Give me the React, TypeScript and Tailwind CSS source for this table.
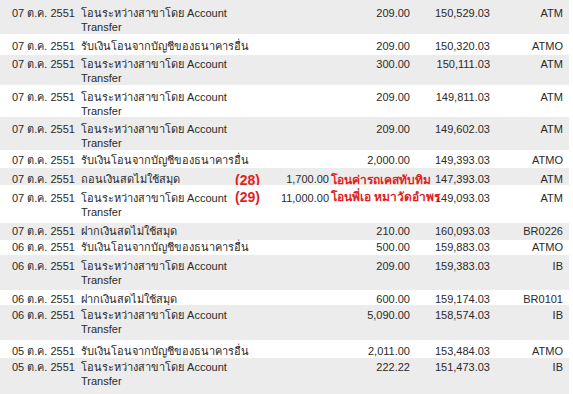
const GRAY = "bg-[#ececec]"

type Row = {
  date: string
  desc: string[]
  amount: string
  balance: string
  channel: string
  gray: boolean
  h: string
  pt: string
  note?: { tag: string; text: string }
}

const T = ["โอนระหว่างสาขาโดย Account", "Transfer"]
const R = ["รับเงินโอนจากบัญชีของธนาคารอื่น"]

const rows: Row[] = [
  { date: "07 ต.ค. 2551", desc: T, amount: "209.00", balance: "150,529.03", channel: "ATM", gray: true, h: "h-[34px]", pt: "pt-[6px]" },
  { date: "07 ต.ค. 2551", desc: R, amount: "209.00", balance: "150,320.03", channel: "ATMO", gray: false, h: "h-[21px]", pt: "pt-[5px]" },
  { date: "07 ต.ค. 2551", desc: T, amount: "300.00", balance: "150,111.03", channel: "ATM", gray: true, h: "h-[30px]", pt: "pt-[2px]" },
  { date: "07 ต.ค. 2551", desc: T, amount: "209.00", balance: "149,811.03", channel: "ATM", gray: false, h: "h-[32px]", pt: "pt-[5px]" },
  { date: "07 ต.ค. 2551", desc: T, amount: "209.00", balance: "149,602.03", channel: "ATM", gray: true, h: "h-[33px]", pt: "pt-[5px]" },
  { date: "07 ต.ค. 2551", desc: R, amount: "2,000.00", balance: "149,393.03", channel: "ATMO", gray: false, h: "h-[18px]", pt: "pt-[3px]" },
  {
    date: "07 ต.ค. 2551", desc: ["ถอนเงินสดไม่ใช้สมุด"], amount: "1,700.00", balance: "147,393.03", channel: "ATM",
    gray: true, h: "h-[17px]", pt: "pt-[4px]", note: { tag: "(28)", text: "โอนค่ารถเคสทับทิม" },
  },
  {
    date: "07 ต.ค. 2551", desc: T, amount: "11,000.00", balance: "149,093.03", channel: "ATM",
    gray: false, h: "h-[38px]", pt: "pt-[6px]", note: { tag: "(29)", text: "โอนพี่เอ หมาวัดอำพร" },
  },
  { date: "07 ต.ค. 2551", desc: ["ฝากเงินสดไม่ใช้สมุด"], amount: "210.00", balance: "160,093.03", channel: "BR0226", gray: true, h: "h-[17px]", pt: "pt-[1px]" },
  { date: "06 ต.ค. 2551", desc: R, amount: "500.00", balance: "159,883.03", channel: "ATMO", gray: false, h: "h-[15px]", pt: "pt-0" },
  { date: "06 ต.ค. 2551", desc: T, amount: "209.00", balance: "159,383.03", channel: "IB", gray: true, h: "h-[35px]", pt: "pt-[4px]" },
  { date: "06 ต.ค. 2551", desc: ["ฝากเงินสดไม่ใช้สมุด"], amount: "600.00", balance: "159,174.03", channel: "BR0101", gray: false, h: "h-[15px]", pt: "pt-[2px]" },
  { date: "06 ต.ค. 2551", desc: T, amount: "5,090.00", balance: "158,574.03", channel: "IB", gray: true, h: "h-[35px]", pt: "pt-[3px]" },
  { date: "05 ต.ค. 2551", desc: R, amount: "2,011.00", balance: "153,484.03", channel: "ATMO", gray: false, h: "h-[18px]", pt: "pt-[4px]" },
  { date: "05 ต.ค. 2551", desc: T, amount: "222.22", balance: "151,473.03", channel: "IB", gray: true, h: "h-[36px]", pt: "pt-[2px]" },
]

export default function App() {
  return (
    <div className="w-[573px] h-[394px] overflow-hidden bg-white font-['Liberation_Sans','Noto_Sans',Tahoma,sans-serif] text-[11px] leading-[14px] text-[#2a2a2a]">
      <div className="w-[569px]">
        {rows.map((r, i) => (
          <div
            key={i}
            className={`relative grid grid-cols-[69px_180px_149px_80px_73px] pl-[12px] overflow-visible ${r.h} ${r.pt} ${r.gray ? GRAY : "bg-white"}`}
          >
            <div className="whitespace-nowrap">{r.date}</div>
            <div className="whitespace-nowrap">
              {r.desc.map((l, j) => (
                <div key={j}>{l}</div>
              ))}
            </div>
            <div className={`text-right whitespace-nowrap ${r.note ? "pr-[81px]" : ""}`}>{r.amount}</div>
            <div className="text-right whitespace-nowrap">{r.balance}</div>
            <div className="text-right whitespace-nowrap">{r.channel}</div>
            {r.note && (
              <>
                <span className="absolute left-[235px] top-[3px] text-[14px] leading-[18px] font-bold text-[#e01f1f]">
                  {r.note.tag}
                </span>
                <span className="absolute left-[331px] top-[4px] text-[12px] leading-[16px] font-bold text-[#e01f1f] whitespace-nowrap">
                  {r.note.text}
                </span>
              </>
            )}
          </div>
        ))}
      </div>
    </div>
  )
}
